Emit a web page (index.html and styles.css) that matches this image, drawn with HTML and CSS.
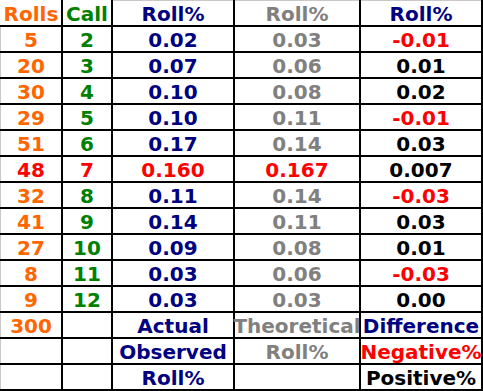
FILE: index.html
```html
<!DOCTYPE html>
<html>
<head>
<meta charset="utf-8">
<link rel="stylesheet" href="styles.css">
</head>
<body>
<div class="sheet">
  <div class="c first top-plain orange">Rolls</div>
  <div class="c top-plain green">Call</div>
  <div class="c top-gray navy">Roll%</div>
  <div class="c top-gray gray">Roll%</div>
  <div class="c top-gray navy">Roll%</div>

  <div class="c first orange">5</div><div class="c green">2</div><div class="c navy">0.02</div><div class="c gray">0.03</div><div class="c red">-0.01</div>
  <div class="c first orange">20</div><div class="c green">3</div><div class="c navy">0.07</div><div class="c gray">0.06</div><div class="c black">0.01</div>
  <div class="c first orange">30</div><div class="c green">4</div><div class="c navy">0.10</div><div class="c gray">0.08</div><div class="c black">0.02</div>
  <div class="c first orange">29</div><div class="c green">5</div><div class="c navy">0.10</div><div class="c gray">0.11</div><div class="c red">-0.01</div>
  <div class="c first orange">51</div><div class="c green">6</div><div class="c navy">0.17</div><div class="c gray">0.14</div><div class="c black">0.03</div>
  <div class="c first red">48</div><div class="c red">7</div><div class="c red">0.160</div><div class="c red">0.167</div><div class="c black">0.007</div>
  <div class="c first orange">32</div><div class="c green">8</div><div class="c navy">0.11</div><div class="c gray">0.14</div><div class="c red">-0.03</div>
  <div class="c first orange">41</div><div class="c green">9</div><div class="c navy">0.14</div><div class="c gray">0.11</div><div class="c black">0.03</div>
  <div class="c first orange">27</div><div class="c green">10</div><div class="c navy">0.09</div><div class="c gray">0.08</div><div class="c black">0.01</div>
  <div class="c first orange">8</div><div class="c green">11</div><div class="c navy">0.03</div><div class="c gray">0.06</div><div class="c red">-0.03</div>
  <div class="c first orange">9</div><div class="c green">12</div><div class="c navy">0.03</div><div class="c gray">0.03</div><div class="c black">0.00</div>

  <div class="c first orange">300</div><div class="c"></div><div class="c navy">Actual</div><div class="c gray">Theoretical</div><div class="c navy">Difference</div>
  <div class="c first"></div><div class="c"></div><div class="c navy">Observed</div><div class="c gray">Roll%</div><div class="c red">Negative%</div>
  <div class="c first"></div><div class="c"></div><div class="c navy">Roll%</div><div class="c"></div><div class="c black">Positive%</div>
</div>
</body>
</html>
```
FILE: styles.css
```css
html, body {
  margin: 0;
  padding: 0;
  background: #ffffff;
}
.sheet {
  display: grid;
  grid-template-columns: 61px 48px 120px 124px 120px;
  grid-template-rows: 25px repeat(14, 24px);
  gap: 2px;
  padding: 0 2px 2px 0;
  width: 481px;
  background: #000000;
  font-family: "DejaVu Sans", Verdana, sans-serif;
  font-weight: bold;
  font-size: 20px;
}
.c {
  background: #ffffff;
  display: flex;
  align-items: center;
  justify-content: center;
  white-space: nowrap;
  overflow: visible;
  line-height: 1;
  padding-top: 2px;
  box-sizing: border-box;
}
.first {
  border-left: 1px solid #c8c8c8;
}
.first.top-plain {
  border-left: 1px solid #ffffff;
}
.top-gray {
  border-top: 1px solid #c8c8c8;
}
.orange { color: #ff6600; }
.green { color: #008000; }
.navy { color: #000080; }
.gray { color: #808080; }
.red { color: #ff0000; }
.black { color: #000000; }
```
